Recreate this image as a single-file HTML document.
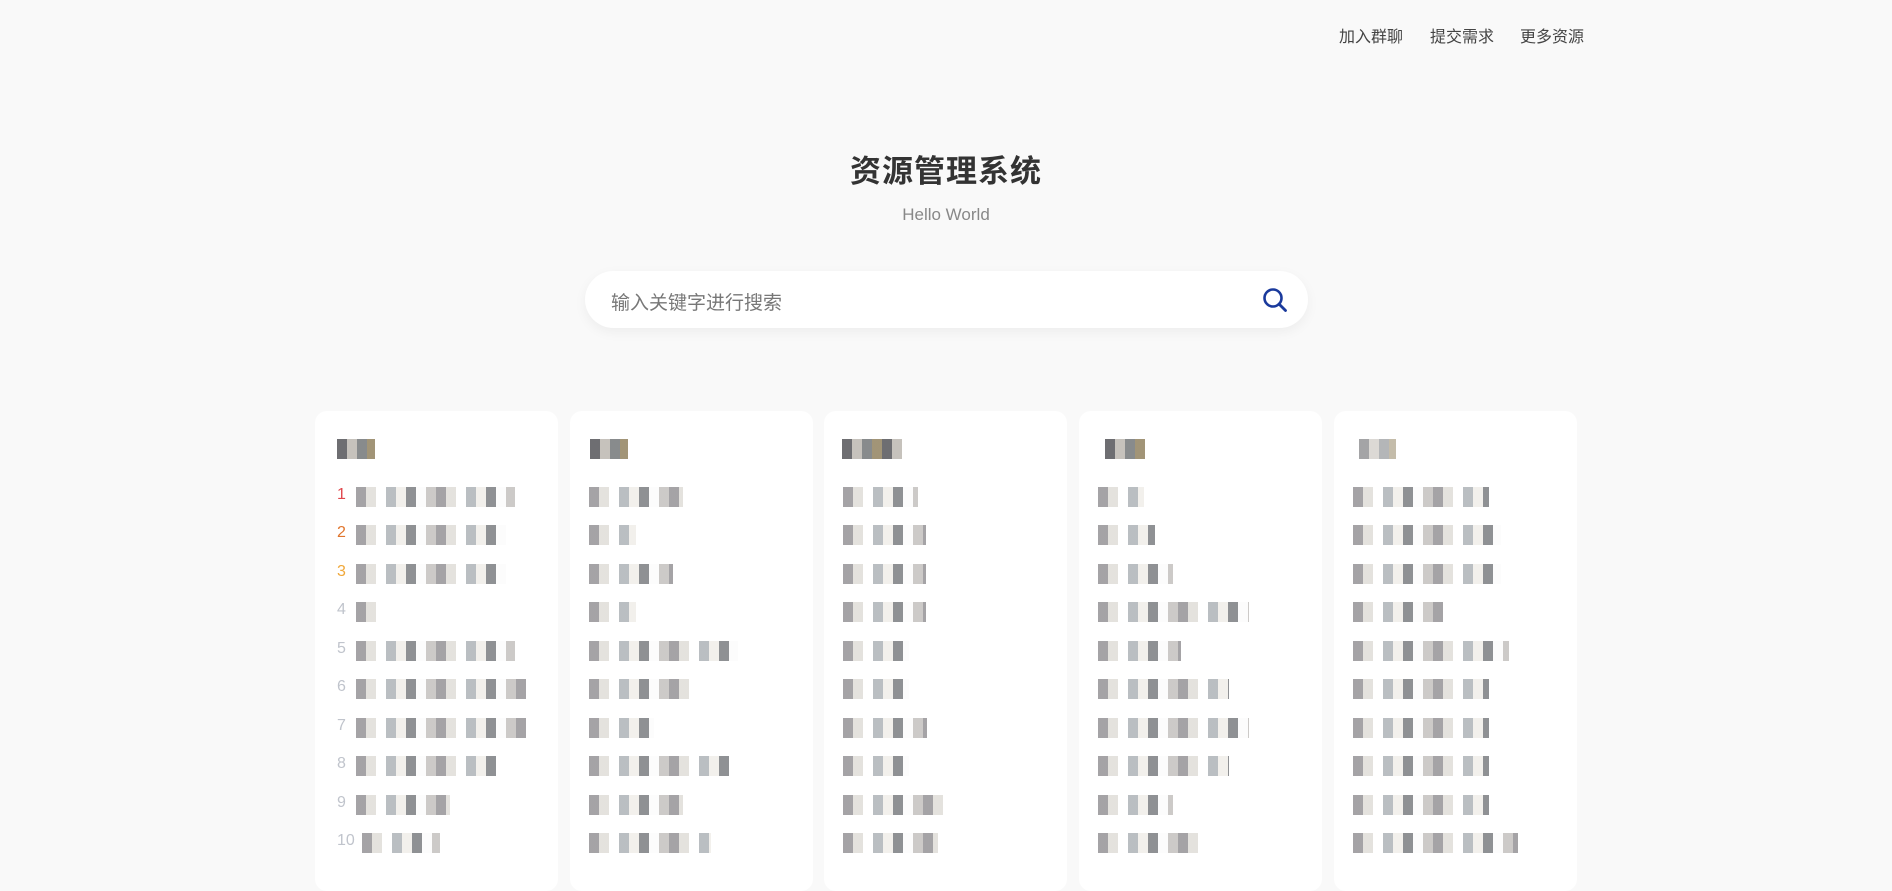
<!DOCTYPE html>
<html><head><meta charset="utf-8"><style>
body{margin:0;width:1892px;height:868px;background:#f9f9f9;font-family:"Liberation Sans","Noto Sans CJK SC",sans-serif;overflow:hidden;position:relative}
.nav{position:absolute;top:23px;font-size:16px;color:#444}
h1{position:absolute;top:146px;left:0;width:1892px;text-align:center;margin:0;font-size:31px;font-weight:bold;color:#333;letter-spacing:1px}
.sub{position:absolute;top:205px;left:0;width:1892px;text-align:center;font-size:17px;color:#888}
.search{position:absolute;left:585px;top:271px;width:723px;height:57px;border-radius:29px;background:#fff;box-shadow:0 4px 12px rgba(0,0,0,.05)}
.search span{position:absolute;left:26px;top:17px;font-size:19px;color:#777}
.search svg{position:absolute;right:20px;top:16px}
.card{position:absolute;top:411px;width:243px;height:480px;background:#fff;border-radius:12px}
.r{position:absolute;left:22px;height:38px}
.nn .r{left:0}
.n{position:absolute;left:0;top:8px;width:20px;font-size:16px;color:#c0c4cc}
.b{position:absolute;left:19px;top:9px;height:20px;opacity:.7;background:repeating-linear-gradient(90deg,#7e7c80 0 10px,#d9d6cf 10px 20px,#fff 20px 30px,#9da3a8 30px 40px,#ece9e4 40px 50px,#5f6266 50px 60px,#fafafa 60px 70px,#b7b4b0 70px 80px)}
.h{position:absolute;left:22px;top:28px;height:20px;opacity:.8;background:repeating-linear-gradient(90deg,#4a4a4e 0 10px,#b8b3ab 10px 20px,#6a6e70 20px 30px,#8a7a55 30px 40px)}
</style></head><body>
<div class="nav" style="left:1339px">加入群聊</div>
<div class="nav" style="left:1430px">提交需求</div>
<div class="nav" style="left:1520px">更多资源</div>
<h1>资源管理系统</h1>
<div class="sub">Hello World</div>
<div class="search"><span>输入关键字进行搜索</span>
<svg width="26" height="26" viewBox="0 0 26 26"><circle cx="11" cy="11" r="8.5" fill="none" stroke="#1a3a9c" stroke-width="2.6"/><line x1="17" y1="17" x2="23.5" y2="23.5" stroke="#1a3a9c" stroke-width="2.8" stroke-linecap="round"/></svg></div>

<div class="card" style="left:315px">
<div class="h" style="width:38px"></div>
<div class="r" style="top:67px"><span class="n" style="color:#e0474c">1</span><div class="b" style="width:159px"></div></div>
<div class="r" style="top:105px"><span class="n" style="color:#e0752d">2</span><div class="b" style="width:150px"></div></div>
<div class="r" style="top:144px"><span class="n" style="color:#f0a83a">3</span><div class="b" style="width:150px"></div></div>
<div class="r" style="top:182px"><span class="n">4</span><div class="b" style="width:28px"></div></div>
<div class="r" style="top:221px"><span class="n">5</span><div class="b" style="width:159px"></div></div>
<div class="r" style="top:259px"><span class="n">6</span><div class="b" style="width:170px"></div></div>
<div class="r" style="top:298px"><span class="n">7</span><div class="b" style="width:170px"></div></div>
<div class="r" style="top:336px"><span class="n">8</span><div class="b" style="width:140px"></div></div>
<div class="r" style="top:375px"><span class="n">9</span><div class="b" style="width:94px"></div></div>
<div class="r" style="top:413px"><span class="n">10</span><div class="b" style="left:25px;width:78px"></div></div>
</div>

<div class="card nn" style="left:570px">
<div class="h" style="left:20px;width:38px"></div>
<div class="r" style="top:67px"><div class="b" style="width:94px"></div></div>
<div class="r" style="top:105px"><div class="b" style="width:47px"></div></div>
<div class="r" style="top:144px"><div class="b" style="width:84px"></div></div>
<div class="r" style="top:182px"><div class="b" style="width:47px"></div></div>
<div class="r" style="top:221px"><div class="b" style="width:149px"></div></div>
<div class="r" style="top:259px"><div class="b" style="width:104px"></div></div>
<div class="r" style="top:298px"><div class="b" style="width:65px"></div></div>
<div class="r" style="top:336px"><div class="b" style="width:140px"></div></div>
<div class="r" style="top:375px"><div class="b" style="width:94px"></div></div>
<div class="r" style="top:413px"><div class="b" style="width:122px"></div></div>
</div>

<div class="card nn" style="left:824px">
<div class="h" style="left:18px;width:60px"></div>
<div class="r" style="top:67px"><div class="b" style="width:75px"></div></div>
<div class="r" style="top:105px"><div class="b" style="width:83px"></div></div>
<div class="r" style="top:144px"><div class="b" style="width:83px"></div></div>
<div class="r" style="top:182px"><div class="b" style="width:83px"></div></div>
<div class="r" style="top:221px"><div class="b" style="width:66px"></div></div>
<div class="r" style="top:259px"><div class="b" style="width:66px"></div></div>
<div class="r" style="top:298px"><div class="b" style="width:84px"></div></div>
<div class="r" style="top:336px"><div class="b" style="width:66px"></div></div>
<div class="r" style="top:375px"><div class="b" style="width:104px"></div></div>
<div class="r" style="top:413px"><div class="b" style="width:95px"></div></div>
</div>

<div class="card nn" style="left:1079px">
<div class="h" style="left:26px;width:40px"></div>
<div class="r" style="top:67px"><div class="b" style="width:46px"></div></div>
<div class="r" style="top:105px"><div class="b" style="width:57px"></div></div>
<div class="r" style="top:144px"><div class="b" style="width:75px"></div></div>
<div class="r" style="top:182px"><div class="b" style="width:151px"></div></div>
<div class="r" style="top:221px"><div class="b" style="width:83px"></div></div>
<div class="r" style="top:259px"><div class="b" style="width:131px"></div></div>
<div class="r" style="top:298px"><div class="b" style="width:151px"></div></div>
<div class="r" style="top:336px"><div class="b" style="width:131px"></div></div>
<div class="r" style="top:375px"><div class="b" style="width:75px"></div></div>
<div class="r" style="top:413px"><div class="b" style="width:103px"></div></div>
</div>

<div class="card nn" style="left:1334px">
<div class="h" style="left:25px;width:37px;opacity:.5"></div>
<div class="r" style="top:67px"><div class="b" style="width:136px"></div></div>
<div class="r" style="top:105px"><div class="b" style="width:148px"></div></div>
<div class="r" style="top:144px"><div class="b" style="width:148px"></div></div>
<div class="r" style="top:182px"><div class="b" style="width:90px"></div></div>
<div class="r" style="top:221px"><div class="b" style="width:156px"></div></div>
<div class="r" style="top:259px"><div class="b" style="width:136px"></div></div>
<div class="r" style="top:298px"><div class="b" style="width:136px"></div></div>
<div class="r" style="top:336px"><div class="b" style="width:136px"></div></div>
<div class="r" style="top:375px"><div class="b" style="width:136px"></div></div>
<div class="r" style="top:413px"><div class="b" style="width:165px"></div></div>
</div>
</body></html>
